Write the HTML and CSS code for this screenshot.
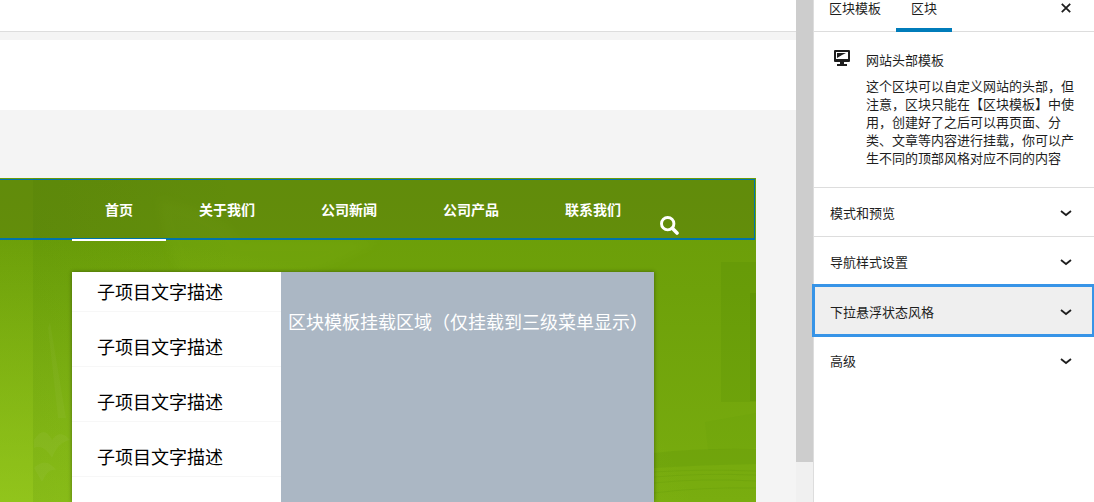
FILE: index.html
```html
<!DOCTYPE html>
<html lang="zh-CN">
<head>
    <meta charset="UTF-8">
    <meta name="viewport" content="width=device-width, initial-scale=1.0">
    <title>区块模板</title>
    <link rel="stylesheet" href="styles.css">
</head>
<body>
    <div class="editor">
        <main class="canvas">
            <div class="top-bar"></div>
            <div class="title-block"></div>
            <section class="site-header">
                <!-- Faint shapes in the banner -->
                <svg class="banner-art" viewBox="0 0 756 324" preserveAspectRatio="none" aria-hidden="true">
                    <defs>
                        <linearGradient id="fade" x1="0" y1="0" x2="1" y2="0">
                            <stop offset="0" stop-color="#3f7a00" stop-opacity=".13"/>
                            <stop offset="1" stop-color="#3f7a00" stop-opacity="0"/>
                        </linearGradient>
                        <filter id="soft"><feGaussianBlur stdDeviation="5"/></filter>
                    </defs>
                    <rect x="33" y="0" width="200" height="324" fill="url(#fade)"/>
                    <path d="M158 20 C190 26 230 40 240 62 L380 62 C350 80 330 88 310 94 L180 94 C168 70 160 50 158 20Z" fill="#8fc01a" opacity=".1" filter="url(#soft)"/>
                    <path d="M50 144 L66 240 L58 240 L48 150Z" fill="#fff" opacity=".03"/>
                    <path d="M34 262 Q44 246 52 262 Q60 250 70 262 Q58 264 52 280 Q44 266 34 270Z M34 290 Q46 278 56 292 Q48 290 42 304Z" fill="#fff" opacity=".04"/>
                    <rect x="721" y="84" width="35" height="140" fill="#3f7a00" opacity=".1"/>
                    <rect x="750" y="115" width="6" height="108" fill="#3f7a00" opacity=".15"/>
                    <path d="M705 244 L756 235 L756 270 L708 272Z" fill="#3f7a00" opacity=".04"/>
                    <path d="M654 275 Q700 270 756 271 L756 286 Q700 287 654 290Z" fill="#3f7a00" opacity=".1"/>
                    <path d="M654 294 Q700 291 756 293 M654 299 Q700 295 756 297 M654 305 Q700 300 756 303 M654 315 Q700 309 756 310" stroke="#3f7a00" fill="none" opacity=".1"/>
                </svg>
                <nav class="nav">
                    <a class="nav-item active" href="#">首页</a>
                    <a class="nav-item" href="#">关于我们</a>
                    <a class="nav-item" href="#">公司新闻</a>
                    <a class="nav-item" href="#">公司产品</a>
                    <a class="nav-item" href="#">联系我们</a>
                    <button class="search" type="button" aria-label="搜索">
                        <svg width="19" height="19" viewBox="0 0 19 19" fill="none" stroke="#fff">
                            <circle cx="7.7" cy="7.7" r="6.2" stroke-width="2.9"/>
                            <path d="M12.3 12.3 L17 17" stroke-width="3.6" stroke-linecap="round"/>
                        </svg>
                    </button>
                </nav>
                <div class="dropdown">
                    <ul class="sub-menu">
                        <li><a href="#">子项目文字描述</a></li>
                        <li><a href="#">子项目文字描述</a></li>
                        <li><a href="#">子项目文字描述</a></li>
                        <li><a href="#">子项目文字描述</a></li>
                    </ul>
                    <div class="mount-area">区块模板挂载区域（仅挂载到三级菜单显示）</div>
                </div>
            </section>
        </main>
        <div class="scrollbar"><div class="thumb"></div></div>

        <aside class="sidebar">
            <div class="tabs">
                <button class="tab" type="button">区块模板</button>
                <button class="tab selected" type="button">区块</button>
                <button class="close" type="button" aria-label="关闭">
                    <svg width="10" height="10" viewBox="0 0 10 10" stroke="#1e1e1e" stroke-width="1.8">
                        <path d="M.8 .8 L9.2 9.2 M9.2 .8 L.8 9.2"/>
                    </svg>
                </button>
            </div>
            <div class="block-card">
                <svg class="block-icon" width="16" height="16" viewBox="0 0 16 16" fill="#1e1e1e">
                    <path fill-rule="evenodd" d="M1 0 H15 Q16 0 16 1 V11 Q16 12 15 12 H10 V14 H13 V16 H3 V14 H6 V12 H1 Q0 12 0 11 V1 Q0 0 1 0Z M2 2 V9 H14 V2Z"/>
                    <path d="M3 3 H12 L8 5 L3 8Z"/>
                </svg>
                <div>
                    <h2>网站头部模板</h2>
                    <p>这个区块可以自定义网站的头部，但注意，区块只能在【区块模板】中使用，创建好了之后可以再页面、分类、文章等内容进行挂载，你可以产生不同的顶部风格对应不同的内容</p>
                </div>
            </div>
            <button class="panel" type="button">
                模式和预览
                <svg width="12" height="7" viewBox="0 0 12 7"><path d="M1 1 L6 5 L11 1"/></svg>
            </button>
            <button class="panel" type="button">
                导航样式设置
                <svg width="12" height="7" viewBox="0 0 12 7"><path d="M1 1 L6 5 L11 1"/></svg>
            </button>
            <button class="panel focused" type="button">
                下拉悬浮状态风格
                <svg width="12" height="7" viewBox="0 0 12 7"><path d="M1 1 L6 5 L11 1"/></svg>
            </button>
            <button class="panel" type="button">
                高级
                <svg width="12" height="7" viewBox="0 0 12 7"><path d="M1 1 L6 5 L11 1"/></svg>
            </button>
        </aside>
    </div>
</body>
</html>
```

FILE: styles.css
```css
*{
    box-sizing: border-box;
}
body{
    margin: 0;
    font-family: "Noto Sans CJK SC", sans-serif;
    font-size: 13px;
    color: #1e1e1e;
}
button{
    margin: 0;
    padding: 0;
    border: 0;
    background: none;
    font: inherit;
    color: inherit;
    cursor: pointer;
}
a{
    color: inherit;
    text-decoration: none;
}
svg{
    display: block;
}
.editor{
    display: flex;
    height: 100vh;
    overflow: hidden;
}

/*
* Canvas
*/
.canvas{
    flex: 1;
    min-width: 0;
    display: flex;
    flex-direction: column;
    background-color: #f4f4f4;
}
.top-bar{
    height: 32px;
    background-color: white;
    border-bottom: 1px solid #ddd;
}
.title-block{
    height: 70px;
    margin: 8px 0 68px;
    background-color: white;
}
.scrollbar{
    flex: none;
    width: 17px;
    background-color: #f0f0f0;
}
.thumb{
    height: 92%;
    background-color: #cdcdcd;
}

/*
* Site header
*/
.site-header{
    position: relative;
    flex: 1;
    display: flex;
    flex-direction: column;
    margin-right: 40px;
    padding-top: 1px;
    background: radial-gradient(ellipse 700px 300px at 0 110%, rgba(160, 210, 35, .7), transparent),
        linear-gradient(#6a9c08, #6ea10a 35%, #79ad0f);
}
.banner-art{
    position: absolute;
    left: 0;
    top: 0;
    width: 100%;
    height: 100%;
}
.nav{
    position: relative;
    display: flex;
    height: 61px;
    margin-right: 1px;
    padding-left: 72px;
    background-color: rgba(72, 90, 20, .25);
    border: 1px solid #0073aa;
    border-width: 1px 1px 2px 0;
}
.nav-item{
    height: 61px;
    padding: 0 33px;
    font-size: 14px;
    font-weight: bold;
    line-height: 58px;
    color: white;
}
.nav-item.active{
    border-bottom: 2px solid white;
}
.search{
    align-self: flex-end;
    margin: 0 0 3px 6px;
}

/*
* Dropdown
*/
.dropdown{
    position: relative;
    flex: 1;
    display: flex;
    margin: 32px 102px 0 72px;
    font-size: 18px;
    box-shadow: 0 0 4px rgba(0, 0, 0, .4);
}
.sub-menu{
    flex: 0 0 209px;
    display: flex;
    flex-direction: column;
    gap: 15px;
    margin: 0;
    padding: 0;
    list-style: none;
    background-color: white;
    color: black;
}
.sub-menu li{
    padding-left: 25px;
    line-height: 39px;
    border-bottom: 1px solid #f7f7f7;
}
.mount-area{
    flex: 1;
    min-width: 0;
    padding: 36px 7px;
    line-height: 26px;
    white-space: nowrap;
    background-color: #abb7c4;
    color: white;
}

/*
* Sidebar
*/
.sidebar{
    flex: none;
    width: 281px;
    border-left: 1px solid #ddd;
    background-color: white;
}
.tabs{
    display: flex;
    height: 32px;
    box-shadow: inset 0 -1px #ddd;
}
.tab{
    padding: 0 15px 12px;
    line-height: 16px;
    border-bottom: 4px solid transparent;
}
.tab.selected{
    border-bottom-color: #007cba;
}
.close{
    margin: 0 23px 16px auto;
}
.block-card{
    display: flex;
    gap: 16px;
    padding: 18px 16px 20px 20px;
}
.block-icon{
    flex: none;
}
.block-card h2{
    margin: 0 0 7px;
    font-size: 13px;
    font-weight: normal;
    line-height: 20px;
}
.block-card p{
    margin: 0;
    line-height: 18px;
}
.panel{
    display: flex;
    align-items: center;
    justify-content: space-between;
    width: 100%;
    height: 49px;
    padding: 0 22px 0 16px;
    border-top: 1px solid #ddd;
}
.panel svg{
    margin-top: 3px;
    fill: none;
    stroke: #1e1e1e;
    stroke-width: 1.8;
}
.panel.focused{
    position: relative;
    width: calc(100% - 1px);
    margin-top: 1px;
    padding-right: 21px;
    border-top-color: transparent;
    background-color: #efefef;
    outline: 3px solid #3794e7;
    outline-offset: -1px;
}
.panel.focused + .panel{
    border-top-color: transparent;
}
```
